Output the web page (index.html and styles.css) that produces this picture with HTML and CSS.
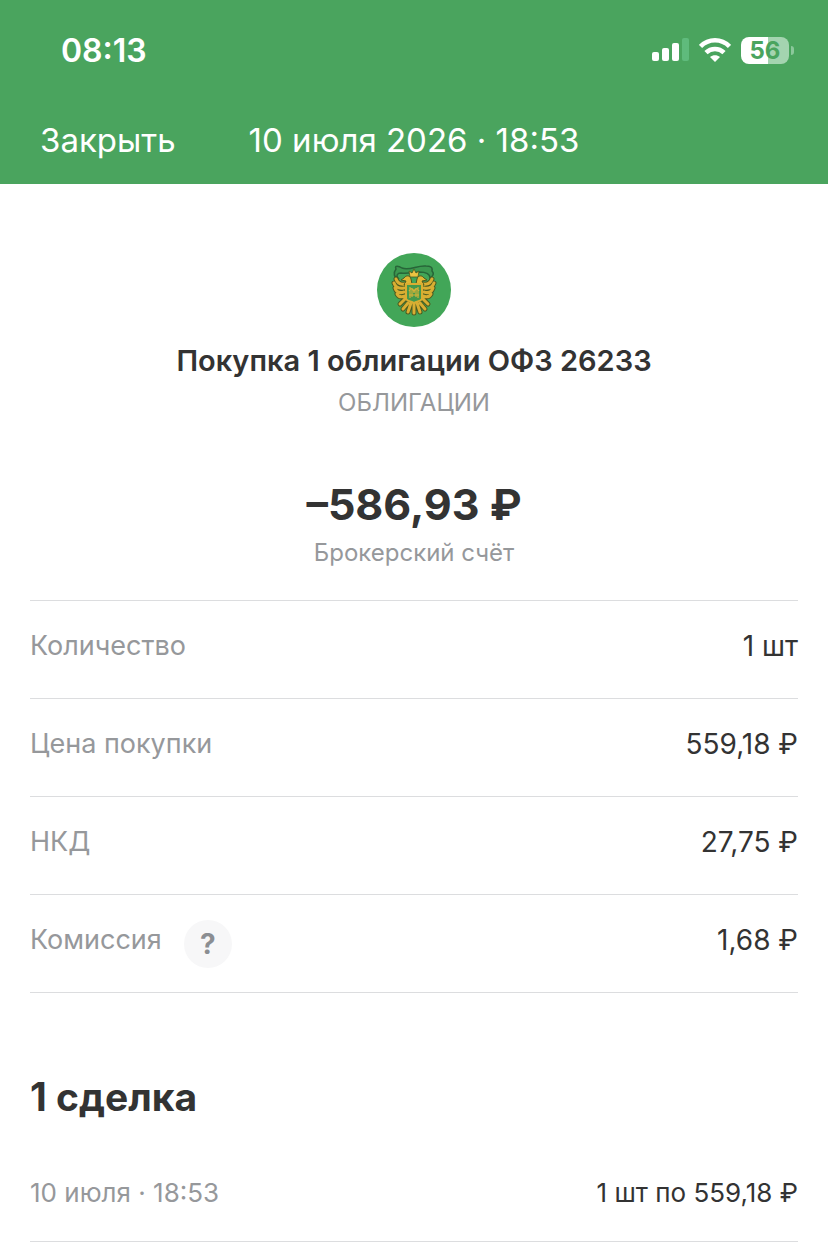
FILE: index.html
```html
<!DOCTYPE html>
<html lang="ru">
<head>
    <meta charset="UTF-8">
    <meta name="viewport" content="width=device-width, initial-scale=1.0">
    <title>Покупка облигации</title>
    <link rel="stylesheet" href="styles.css">
</head>
<body>
    <header class="header">
        <div class="status">
            <span class="status-time">08:13</span>
            <div class="status-icons">
                <svg class="signal" width="38" height="24" viewBox="0 0 38 24" fill="#fff">
                    <rect x="0" y="14" width="7" height="9" rx="2"/>
                    <rect x="10" y="10" width="7" height="13" rx="2"/>
                    <rect x="20" y="5" width="7" height="18" rx="2"/>
                    <rect x="30" y="0" width="7" height="23" rx="2" fill="#5fbb7c"/>
                </svg>
                <svg class="wifi" width="32" height="24" viewBox="0 0 32 24" fill="none" stroke="#fff" stroke-width="4.500">
                    <path d="M1.500 8.500C9.500 .2 22.500 .2 30.500 8.500"/>
                    <path d="M7 14.700C12 9.700 20 9.700 25 14.700"/>
                    <path d="M16 24L11 19C14 16.500 18 16.500 21 19Z" fill="#fff" stroke="none"/>
                </svg>
                <div class="battery"><span class="battery-level">56</span></div>
            </div>
        </div>
        <nav class="nav">
            <button class="nav-close" type="button">Закрыть</button>
            <span class="nav-date">10 июля 2026 · 18:53</span>
        </nav>
    </header>
    <main class="content">
        <section class="summary">
            <svg class="logo" viewBox="0 0 74 74">
                <circle cx="37" cy="37" r="37" fill="#42a658"/>
                <!-- лента -->
                <path d="M19 16C17 12 22 13 25 15C33 18 40 12 49 13C53 13 56 14 55 18C58 21 55 24 53 25C53 20 46 19 42 19C33 20 28 21 24 20C20 20 19 23 21 25C17 25 16 20 19 16Z" fill="#3c9850" stroke="#276538" stroke-width="1.500"/>
                <!-- крылья -->
                <g fill="none" stroke="#4b5b20" stroke-width="5" stroke-linecap="round">
                    <path d="M28 31C22 32 20 29 19 26M27 35C21 36 18 33 17 30M27 39C21 41 19 38 18 35M28 43C23 45 21 43 20 41M28 46L23 51M46 31C52 32 54 29 55 26M47 35C53 36 56 33 57 30M47 39C53 41 55 38 56 35M46 43C51 45 53 43 54 41M46 46L51 51"/>
                    <path d="M37 49V60M34 50L31 59M40 50L43 59M31 50L26 56M43 50L48 56"/>
                </g>
                <g fill="none" stroke="#d9ae32" stroke-width="3" stroke-linecap="round">
                    <path d="M28 31C22 32 20 29 19 26M27 35C21 36 18 33 17 30M27 39C21 41 19 38 18 35M28 43C23 45 21 43 20 41M28 46L23 51M46 31C52 32 54 29 55 26M47 35C53 36 56 33 57 30M47 39C53 41 55 38 56 35M46 43C51 45 53 43 54 41M46 46L51 51"/>
                    <path d="M37 49V60M34 50L31 59M40 50L43 59M31 50L26 56M43 50L48 56"/>
                </g>
                <!-- головы и корона -->
                <path d="M35 31L34 26C33 22 29 22 27 25L24 27L29 28L27 32ZM39 31L40 26C41 22 45 22 47 25L50 27L45 28L47 32Z" fill="#e0b634" stroke="#4b5b20"/>
                <path d="M33 24L32 18L35 20L37 16L39 20L42 18L41 24Z" fill="#edc342" stroke="#4b5b20" stroke-width=".8"/>
                <!-- щит -->
                <path d="M29 31H45V46C43 49 40 48 37 50C34 48 31 49 29 46Z" fill="#45994b" stroke="#d9ae32" stroke-width="2"/>
                <path d="M33 34V45M35 36V44M39 36V44M41 34V45M32 38C35 33 37 37 37 40C37 37 39 33 42 38M32 42H42" fill="none" stroke="#d5b238" stroke-width="1.200"/>
            </svg>
            <h1 class="title">Покупка 1 облигации ОФЗ 26233</h1>
            <p class="kind">ОБЛИГАЦИИ</p>
            <p class="amount">–586,93 ₽</p>
            <p class="account">Брокерский счёт</p>
        </section>
        <dl class="details">
            <div class="row">
                <dt>Количество</dt>
                <dd>1 шт</dd>
            </div>
            <div class="row">
                <dt>Цена покупки</dt>
                <dd>559,18 ₽</dd>
            </div>
            <div class="row">
                <dt>НКД</dt>
                <dd>27,75 ₽</dd>
            </div>
            <div class="row">
                <dt>Комиссия <button class="help" type="button" aria-label="О комиссии">?</button></dt>
                <dd>1,68 ₽</dd>
            </div>
        </dl>
        <section class="deals">
            <h2 class="deals-title">1 сделка</h2>
            <ul>
                <li class="deal">
                    <span class="deal-date">10 июля · 18:53</span>
                    <span>1 шт по 559,18 ₽</span>
                </li>
            </ul>
        </section>
    </main>
</body>
</html>
```
FILE: styles.css
```css
*{
    padding: 0;
    margin: 0;
    box-sizing: border-box;
}
body{
    font-family: Inter, "Liberation Sans", sans-serif;
    background-color: #fff;
    color: #333;
}
button{
    border: none;
    font-family: inherit;
    cursor: pointer;
}
li{
    list-style: none;
}
.header{
    padding-bottom: 24px;
    background-color: #4aa45e;
    color: #fff;
}
.status{
    display: flex;
    justify-content: space-between;
    align-items: center;
    height: 100px;
    padding: 0 39px 0 61px;
}
.status-time{
    font-size: 32px;
    font-weight: 600;
}
.status-icons{
    display: flex;
    align-items: center;
}
.wifi{
    margin: 0 10px 0 9px;
}
.battery{
    position: relative;
    width: 48px;
    height: 27px;
    border-radius: 8px;
    background: linear-gradient(to right, #fff 56%, #a4d4b0 56%);
}
.battery::after{
    content: "";
    position: absolute;
    left: 50px;
    top: 9px;
    width: 3px;
    height: 9px;
    border-radius: 0 4px 4px 0;
    background-color: #8bc89b;
}
.battery-level{
    display: block;
    color: #4aa45e;
    font-size: 24px;
    font-weight: 700;
    line-height: 27px;
    text-align: center;
}
.nav{
    display: grid;
    grid-template-columns: 1fr auto 1fr;
    align-items: center;
    padding: 20px 40px 0;
    line-height: 40px;
}
.nav-close{
    justify-self: start;
    background: none;
    color: #fff;
    font-size: 33px;
    line-height: 40px;
}
.nav-date{
    font-size: 33px;
}
.content{
    padding: 0 30px;
}
.summary{
    padding: 69px 0 31px;
    text-align: center;
}
.logo{
    display: block;
    width: 74px;
    height: 74px;
    margin: 0 auto 16px;
}
.title{
    font-size: 29px;
    font-weight: 600;
    line-height: 36px;
}
.kind, .account{
    color: #96989b;
    font-size: 24px;
    line-height: 32px;
}
.kind{
    margin: 8px 0 57px;
}
.amount{
    margin-bottom: 5px;
    font-size: 43px;
    font-weight: 700;
    line-height: 56px;
}
.details{
    border-top: 1px solid #dcdddf;
}
.row{
    display: flex;
    justify-content: space-between;
    height: 98px;
    padding-top: 25px;
    border-bottom: 1px solid #dcdddf;
    font-size: 28px;
    line-height: 40px;
}
.row dt{
    display: flex;
    gap: 22px;
    color: #96989b;
    font-size: 27px;
}
.help{
    width: 48px;
    height: 48px;
    border-radius: 50%;
    background-color: #f7f7f8;
    color: #8b8e92;
    font-size: 28px;
    font-weight: 700;
}
.deals-title{
    margin: 80px 0 52px;
    font-size: 39px;
    font-weight: 700;
    line-height: 48px;
}
.deal{
    display: flex;
    justify-content: space-between;
    padding-bottom: 28px;
    border-bottom: 1px solid #dcdddf;
    font-size: 26px;
    line-height: 40px;
}
.deal-date{
    color: #96989b;
}
```
